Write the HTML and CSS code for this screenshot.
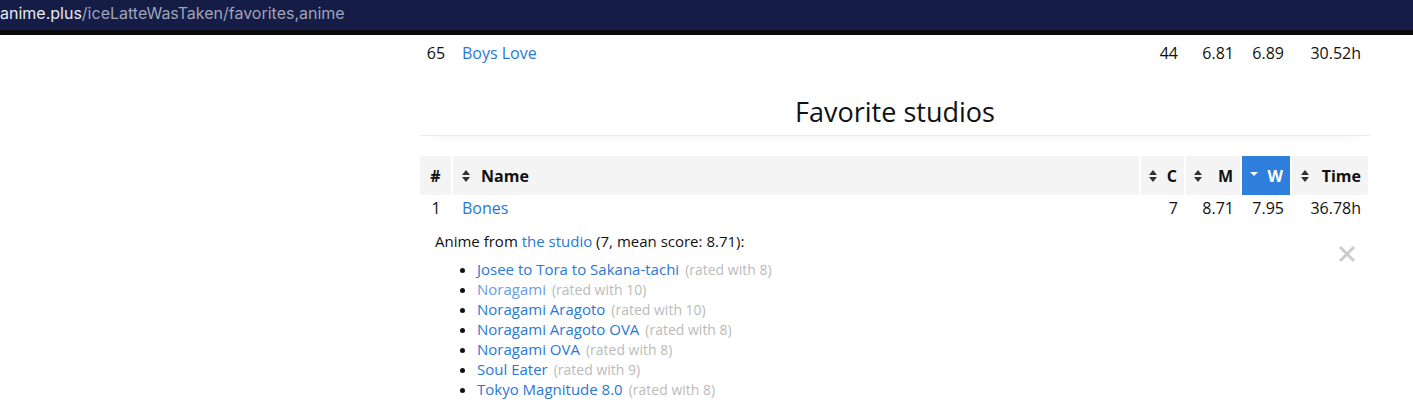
FILE: index.html
```html
<!DOCTYPE html>
<html>
<head>
<meta charset="utf-8">
<link rel="stylesheet" href="styles.css">
</head>
<body>
<div class="urlbar"><span class="domain">anime.plus</span><span class="path">/iceLatteWasTaken/favorites,anime</span></div>
<div class="strip"></div>
<main class="content">
  <table class="tbl top">
    <colgroup><col class="c-num"><col class="c-name"><col class="c-c"><col class="c-m"><col class="c-w"><col class="c-t"></colgroup>
    <tr><td class="num">65</td><td class="name"><a href="#">Boys Love</a></td><td class="val">44</td><td class="val">6.81</td><td class="val">6.89</td><td class="val">30.52h</td></tr>
  </table>
  <h2 class="section-title">Favorite studios</h2>
  <table class="tbl">
    <colgroup><col class="c-num"><col class="c-name"><col class="c-c"><col class="c-m"><col class="c-w"><col class="c-t"></colgroup>
    <thead>
      <tr>
        <th class="num">#</th>
        <th class="left"><div class="th-in"><span class="sort"></span><span class="label">Name</span></div></th>
        <th><div class="th-in"><span class="sort"></span><span class="label">C</span></div></th>
        <th><div class="th-in"><span class="sort"></span><span class="label">M</span></div></th>
        <th class="active"><div class="th-in"><span class="caret"></span><span class="label">W</span></div></th>
        <th><div class="th-in"><span class="sort"></span><span class="label">Time</span></div></th>
      </tr>
    </thead>
    <tbody>
      <tr><td class="num">1</td><td class="name"><a href="#">Bones</a></td><td class="val">7</td><td class="val">8.71</td><td class="val">7.95</td><td class="val">36.78h</td></tr>
      <tr class="details">
        <td colspan="6">
          <div class="detail-box">
            <p class="intro">Anime from <a href="#">the studio</a> (7, mean score: 8.71):</p>
            <span class="close"><svg width="18" height="18" viewBox="0 0 18 18"><path d="M2 2L16 16M16 2L2 16" stroke="#cccccc" stroke-width="3" stroke-linecap="butt"/></svg></span>
            <ul class="anime-list">
              <li><a href="#">Josee to Tora to Sakana-tachi</a><span class="rated">(rated with 8)</span></li>
              <li><a href="#" class="visited">Noragami</a><span class="rated">(rated with 10)</span></li>
              <li><a href="#">Noragami Aragoto</a><span class="rated">(rated with 10)</span></li>
              <li><a href="#">Noragami Aragoto OVA</a><span class="rated">(rated with 8)</span></li>
              <li><a href="#">Noragami OVA</a><span class="rated">(rated with 8)</span></li>
              <li><a href="#">Soul Eater</a><span class="rated">(rated with 9)</span></li>
              <li><a href="#">Tokyo Magnitude 8.0</a><span class="rated">(rated with 8)</span></li>
            </ul>
          </div>
        </td>
      </tr>
    </tbody>
  </table>
</main>
</body>
</html>
```
FILE: styles.css
```css
html, body { margin: 0; padding: 0; background: #fff; }
body { font-family: "Open Sans", "Noto Sans", sans-serif; color: #111; overflow: hidden; }
a { color: #2a78d6; text-decoration: none; }

.urlbar {
  height: 30px;
  background: #151d47;
  font-family: Inter, "Noto Sans", sans-serif;
  font-size: 16px;
  line-height: 26px;
  white-space: nowrap;
}
.domain { color: #e6e8f0; }
.path { color: #9ea3b8; }
.strip { height: 5px; background: #0a0a0c; }

.content { margin-left: 420px; width: 950px; }

.tbl { width: 948px; border-collapse: collapse; table-layout: fixed; font-size: 16px; }
.c-num { width: 32px; }
.c-c { width: 45px; }
.c-m { width: 56px; }
.c-w { width: 50px; }
.c-t { width: 77px; }

.tbl td { padding: 0; height: 27px; line-height: 27px; }
.tbl.top { margin-top: 4px; }
.tbl.top td { height: 28px; }
.num { text-align: center; }
.name { padding-left: 10px !important; }
.val { text-align: right; padding-right: 7px !important; }

.section-title {
  font-weight: 400;
  font-size: 27px;
  text-align: center;
  margin: 23px 0 20px 0;
  padding-bottom: 1px;
  line-height: 44px;
  border-bottom: 1px solid #ececec;
  box-shadow: 0 10px 14px -12px rgba(0,0,0,0.08);
}

.tbl th {
  background: #f4f4f4;
  height: 39px;
  padding: 0 7px 0 8px;
  font-weight: 700;
  font-size: 16px;
  border-left: 2px solid #fff;
  white-space: nowrap;
}
.tbl th.num { border-left: none; text-align: center; padding: 0; }
.tbl th.left { padding-left: 9px; }
.tbl th:last-child { padding-left: 9px; }
.tbl th.active { background: #2f7fdc; color: #fff; }

.th-in { display: flex; align-items: center; justify-content: space-between; }
.left .th-in { justify-content: flex-start; }
.left .sort { margin-right: 10px; }

.sort {
  display: inline-block;
  position: relative;
  width: 9px; height: 12px;
  flex: none;
}
.sort::before, .sort::after {
  content: "";
  position: absolute;
  left: 0;
  border-left: 4.5px solid transparent;
  border-right: 4.5px solid transparent;
}
.sort::before { top: 0; border-bottom: 5px solid #333; }
.sort::after { top: 7px; border-top: 5px solid #333; }

.caret {
  display: inline-block;
  width: 0; height: 0;
  border-left: 4.5px solid transparent;
  border-right: 4.5px solid transparent;
  border-top: 4.5px solid #fff;
  margin-top: -4px;
}

.details td { height: auto; line-height: normal; }
.detail-box { position: relative; padding: 0 0 10px 15px; font-size: 15px; }
.intro { margin: 9px 0 0; line-height: 20px; }
.close { position: absolute; right: 12px; top: 14px; }
.anime-list { margin: 8px 0 0; padding-left: 42px; line-height: 20px; }
.anime-list li { font-size: 15px; height: 20px; }
.anime-list a.visited { color: #6a9de6; }
.rated { color: #bbb; font-size: 14px; margin-left: 6px; line-height: 1; }
```
